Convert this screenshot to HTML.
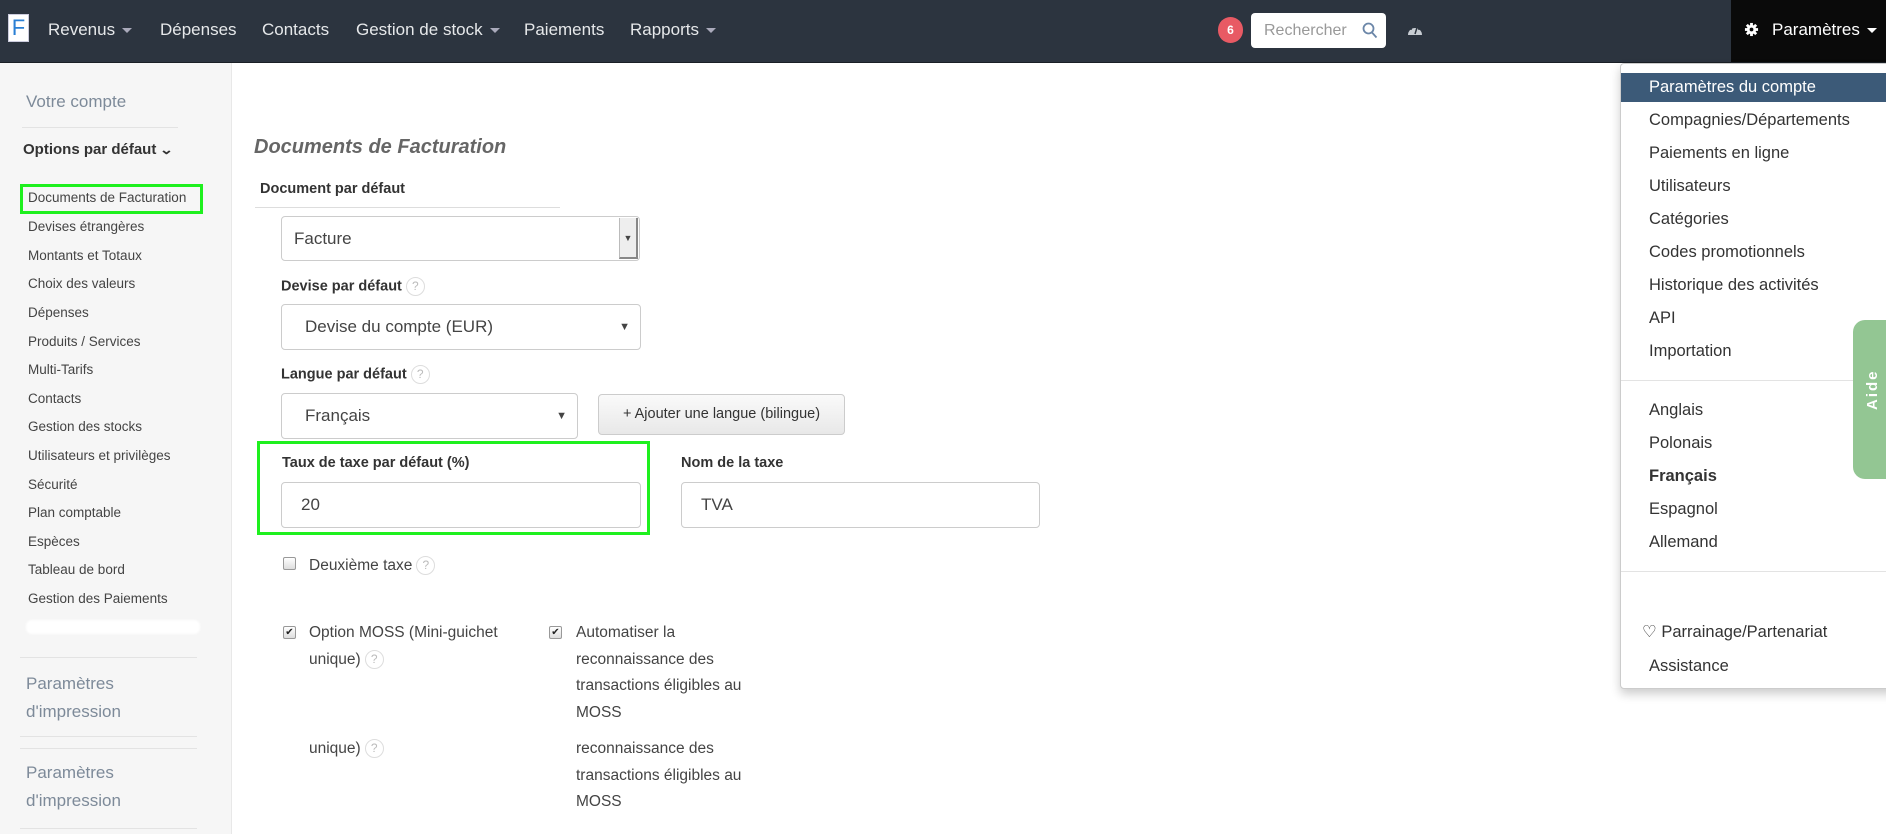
<!DOCTYPE html>
<html><head><meta charset="utf-8"><style>
*{box-sizing:border-box;margin:0;padding:0}
body{width:1886px;height:834px;position:relative;overflow:hidden;background:#fff;font-family:"Liberation Sans",Arial,sans-serif;color:#333}
.a{position:absolute;white-space:nowrap}
#nav{position:absolute;left:0;top:0;width:1886px;height:63px;background:#2c343f;border-bottom:1px solid #1a1f26}
.ni{position:absolute;top:19px;color:#e6e8ea;font-size:17px;line-height:22px}
.car{display:inline-block;width:0;height:0;border-left:5px solid transparent;border-right:5px solid transparent;border-top:5px solid #aab;margin-left:7px;vertical-align:middle}
#side{position:absolute;left:0;top:63px;width:232px;height:771px;background:#f6f6f6;border-right:1px solid #e8e8e8}
.sl{position:absolute;left:28px;font-size:13.5px;color:#444;line-height:18px}
.hr{position:absolute;height:1px;background:#e3e3e3}
.lab{position:absolute;font-weight:bold;font-size:14.5px;color:#333;line-height:18px}
.inp{position:absolute;border:1px solid #ccc;border-radius:4px;background:#fff;font-size:17px;color:#444;line-height:20px;padding-left:14px}
.q{display:inline-block;width:19px;height:19px;border:1px solid #ddd;border-radius:50%;color:#bbb;font-size:12px;text-align:center;line-height:17px;vertical-align:middle;margin-left:4px;font-weight:normal}
.arr{position:absolute;right:10px;font-size:11px;color:#444}
.t{position:absolute;font-size:15.5px;color:#444;line-height:26.5px}
.cb{position:absolute;width:13px;height:13px;border:1px solid #999;border-radius:2px;background:linear-gradient(#fff,#ddd);font-size:10px;line-height:11px;text-align:center;color:#222}
#dd{position:absolute;left:1620px;top:63px;width:280px;height:626px;background:#fff;border:1px solid #ccc;border-radius:4px;box-shadow:0 5px 10px rgba(0,0,0,.2)}
.di{position:absolute;left:28px;font-size:16.5px;color:#333;line-height:22px}
</style></head><body>
<div id="nav">
 <div class="a" style="left:8px;top:14px;width:21px;height:28px;background:#fff;border:1px solid #ccd;color:#2a7fd4;font-size:22px;line-height:26px;text-align:center">F</div>
 <div class="ni" style="left:48px">Revenus<span class="car"></span></div>
 <div class="ni" style="left:160px">Dépenses</div>
 <div class="ni" style="left:262px">Contacts</div>
 <div class="ni" style="left:356px">Gestion de stock<span class="car"></span></div>
 <div class="ni" style="left:524px">Paiements</div>
 <div class="ni" style="left:630px">Rapports<span class="car"></span></div>
 <div class="a" style="left:1218px;top:17px;width:25px;height:26px;border-radius:13px;background:#e85a64;color:#fff;font-size:12px;font-weight:bold;text-align:center;line-height:26px">6</div>
 <div class="a" style="left:1251px;top:13px;width:135px;height:35px;background:#fff;border-radius:4px;color:#999;font-size:16px;line-height:35px;padding-left:13px">Rechercher
  <svg style="position:absolute;right:8px;top:9px" width="16" height="17" viewBox="0 0 16 17"><circle cx="6.5" cy="6.5" r="5" fill="none" stroke="#6b86a8" stroke-width="1.8"/><line x1="10" y1="10.5" x2="14.5" y2="15.5" stroke="#6b86a8" stroke-width="1.8"/></svg></div>
 <svg class="a" style="left:1407px;top:21px" width="16" height="15" viewBox="0 0 16 15"><path d="M1 14A7 7 0 1 1 15 14Z" fill="#c8cdd3"/><line x1="8" y1="13" x2="10.5" y2="5" stroke="#2c343f" stroke-width="1.5"/><circle cx="4" cy="8" r="1" fill="#2c343f"/><circle cx="8" cy="4.5" r="1" fill="#2c343f"/><circle cx="12" cy="8" r="1" fill="#2c343f"/></svg>
 <div class="a" style="left:1731px;top:0;width:155px;height:62px;background:#0a0a0a"></div>
 <svg class="a" style="left:1744px;top:22px" width="15" height="15" viewBox="0 0 16 16"><circle cx="8" cy="8" r="5" fill="#fff"/><g stroke="#fff" stroke-width="3"><line x1="8" y1="1" x2="8" y2="15"/><line x1="1" y1="8" x2="15" y2="8"/><line x1="3" y1="3" x2="13" y2="13"/><line x1="13" y1="3" x2="3" y2="13"/></g><circle cx="8" cy="8" r="2" fill="#0a0a0a"/></svg>
 <div class="ni" style="left:1772px;color:#fff">Paramètres<span class="car" style="border-top-color:#fff"></span></div>
</div>

<div id="side">
 <div class="a" style="left:26px;top:28px;font-size:17px;color:#7d8a99;line-height:22px">Votre compte</div>
 <div class="hr" style="left:22px;top:64px;width:156px"></div>
 <div class="a" style="left:23px;top:77px;font-size:15px;font-weight:bold;color:#333;line-height:20px">Options par défaut <span style="font-size:13px;font-weight:bold;display:inline-block;transform:scaleX(1.3)">⌄</span></div>
 <div class="a" style="left:20px;top:121px;width:183px;height:30px;border:3px solid #1ef01e"></div>
</div>
<div class="sl" style="top:189px">Documents de Facturation</div>
<div class="sl" style="top:218px">Devises étrangères</div>
<div class="sl" style="top:247px">Montants et Totaux</div>
<div class="sl" style="top:275px">Choix des valeurs</div>
<div class="sl" style="top:304px">Dépenses</div>
<div class="sl" style="top:333px">Produits / Services</div>
<div class="sl" style="top:361px">Multi-Tarifs</div>
<div class="sl" style="top:390px">Contacts</div>
<div class="sl" style="top:418px">Gestion des stocks</div>
<div class="sl" style="top:447px">Utilisateurs et privilèges</div>
<div class="sl" style="top:476px">Sécurité</div>
<div class="sl" style="top:504px">Plan comptable</div>
<div class="sl" style="top:533px">Espèces</div>
<div class="sl" style="top:561px">Tableau de bord</div>
<div class="sl" style="top:590px">Gestion des Paiements</div>
<div class="a" style="left:26px;top:620px;width:174px;height:14px;background:#fff;border-radius:6px;filter:blur(1px)"></div>
<div class="hr" style="left:20px;top:657px;width:177px"></div>
<div class="a" style="left:26px;top:670px;font-size:17px;color:#7d8a99;line-height:28px">Paramètres<br>d'impression</div>
<div class="hr" style="left:20px;top:736px;width:177px"></div>
<div class="hr" style="left:20px;top:748px;width:177px"></div>
<div class="a" style="left:26px;top:759px;font-size:17px;color:#7d8a99;line-height:28px">Paramètres<br>d'impression</div>
<div class="hr" style="left:20px;top:828px;width:177px"></div>

<div class="a" style="left:254px;top:135px;font-size:20px;font-weight:bold;font-style:italic;color:#666;line-height:24px">Documents de Facturation</div>
<div class="lab" style="left:260px;top:180px">Document par défaut</div>
<div class="hr" style="left:255px;top:207px;width:305px;background:#ddd"></div>
<div class="inp" style="left:281px;top:216px;width:359px;height:45px;line-height:43px;padding-left:12px">Facture
 <div class="a" style="right:1px;top:1px;width:19px;height:41px;background:#eee;border-left:1px solid #bbb;border-right:2px solid #888;border-bottom:2px solid #888;font-size:9px;text-align:center;line-height:41px">▼</div></div>
<div class="lab" style="left:281px;top:277px">Devise par défaut<span class="q">?</span></div>
<div class="inp" style="left:281px;top:304px;width:360px;height:46px;line-height:44px;padding-left:23px">Devise du compte (EUR)<span class="arr">▼</span></div>
<div class="lab" style="left:281px;top:365px">Langue par défaut<span class="q">?</span></div>
<div class="inp" style="left:281px;top:393px;width:297px;height:46px;line-height:44px;padding-left:23px">Français<span class="arr">▼</span></div>
<div class="a" style="left:598px;top:394px;width:247px;height:41px;border:1px solid #ccc;border-radius:4px;background:linear-gradient(#fafafa,#e8e8e8);font-size:14.5px;color:#333;text-align:center;line-height:39px">+ Ajouter une langue (bilingue)</div>
<div class="a" style="left:257px;top:441px;width:393px;height:94px;border:3px solid #1ef01e"></div>
<div class="lab" style="left:282px;top:454px">Taux de taxe par défaut (%)</div>
<div class="inp" style="left:281px;top:482px;width:360px;height:46px;line-height:44px;padding-left:19px">20</div>
<div class="lab" style="left:681px;top:454px">Nom de la taxe</div>
<div class="inp" style="left:681px;top:482px;width:359px;height:46px;line-height:44px;padding-left:19px">TVA</div>
<div class="cb" style="left:283px;top:557px"></div>
<div class="t" style="left:309px;top:553px">Deuxième taxe<span class="q">?</span></div>
<div class="cb" style="left:283px;top:626px">✔</div>
<div class="t" style="left:309px;top:620px">Option MOSS (Mini-guichet<br>unique)<span class="q">?</span></div>
<div class="cb" style="left:549px;top:626px">✔</div>
<div class="t" style="left:576px;top:620px">Automatiser la<br>reconnaissance des<br>transactions éligibles au<br>MOSS</div>
<div class="t" style="left:309px;top:736px">unique)<span class="q">?</span></div>
<div class="t" style="left:576px;top:736px">reconnaissance des<br>transactions éligibles au<br>MOSS</div>

<div id="dd">
 <div class="a" style="left:0;top:9px;width:280px;height:29px;background:#3c5a78"></div>
 <div class="di" style="top:12px;color:#fff">Paramètres du compte</div>
 <div class="di" style="top:45px">Compagnies/Départements</div>
 <div class="di" style="top:78px">Paiements en ligne</div>
 <div class="di" style="top:111px">Utilisateurs</div>
 <div class="di" style="top:144px">Catégories</div>
 <div class="di" style="top:177px">Codes promotionnels</div>
 <div class="di" style="top:210px">Historique des activités</div>
 <div class="di" style="top:243px">API</div>
 <div class="di" style="top:276px">Importation</div>
 <div class="hr" style="left:0;top:316px;width:280px"></div>
 <div class="di" style="top:335px">Anglais</div>
 <div class="di" style="top:368px">Polonais</div>
 <div class="di" style="top:401px;font-weight:bold">Français</div>
 <div class="di" style="top:434px">Espagnol</div>
 <div class="di" style="top:467px">Allemand</div>
 <div class="hr" style="left:0;top:507px;width:280px"></div>
 <div class="di" style="top:557px;left:21px">♡ Parrainage/Partenariat</div>
 <div class="di" style="top:591px">Assistance</div>
</div>
<div class="a" style="left:1853px;top:320px;width:40px;height:159px;background:#93c693;border-radius:12px 0 0 12px"></div>
<div class="a" style="left:1858px;top:385px;width:30px;font-size:15px;font-weight:bold;color:#fff;transform:rotate(-90deg);letter-spacing:2px;line-height:20px;text-align:center">Aide</div>
</body></html>
